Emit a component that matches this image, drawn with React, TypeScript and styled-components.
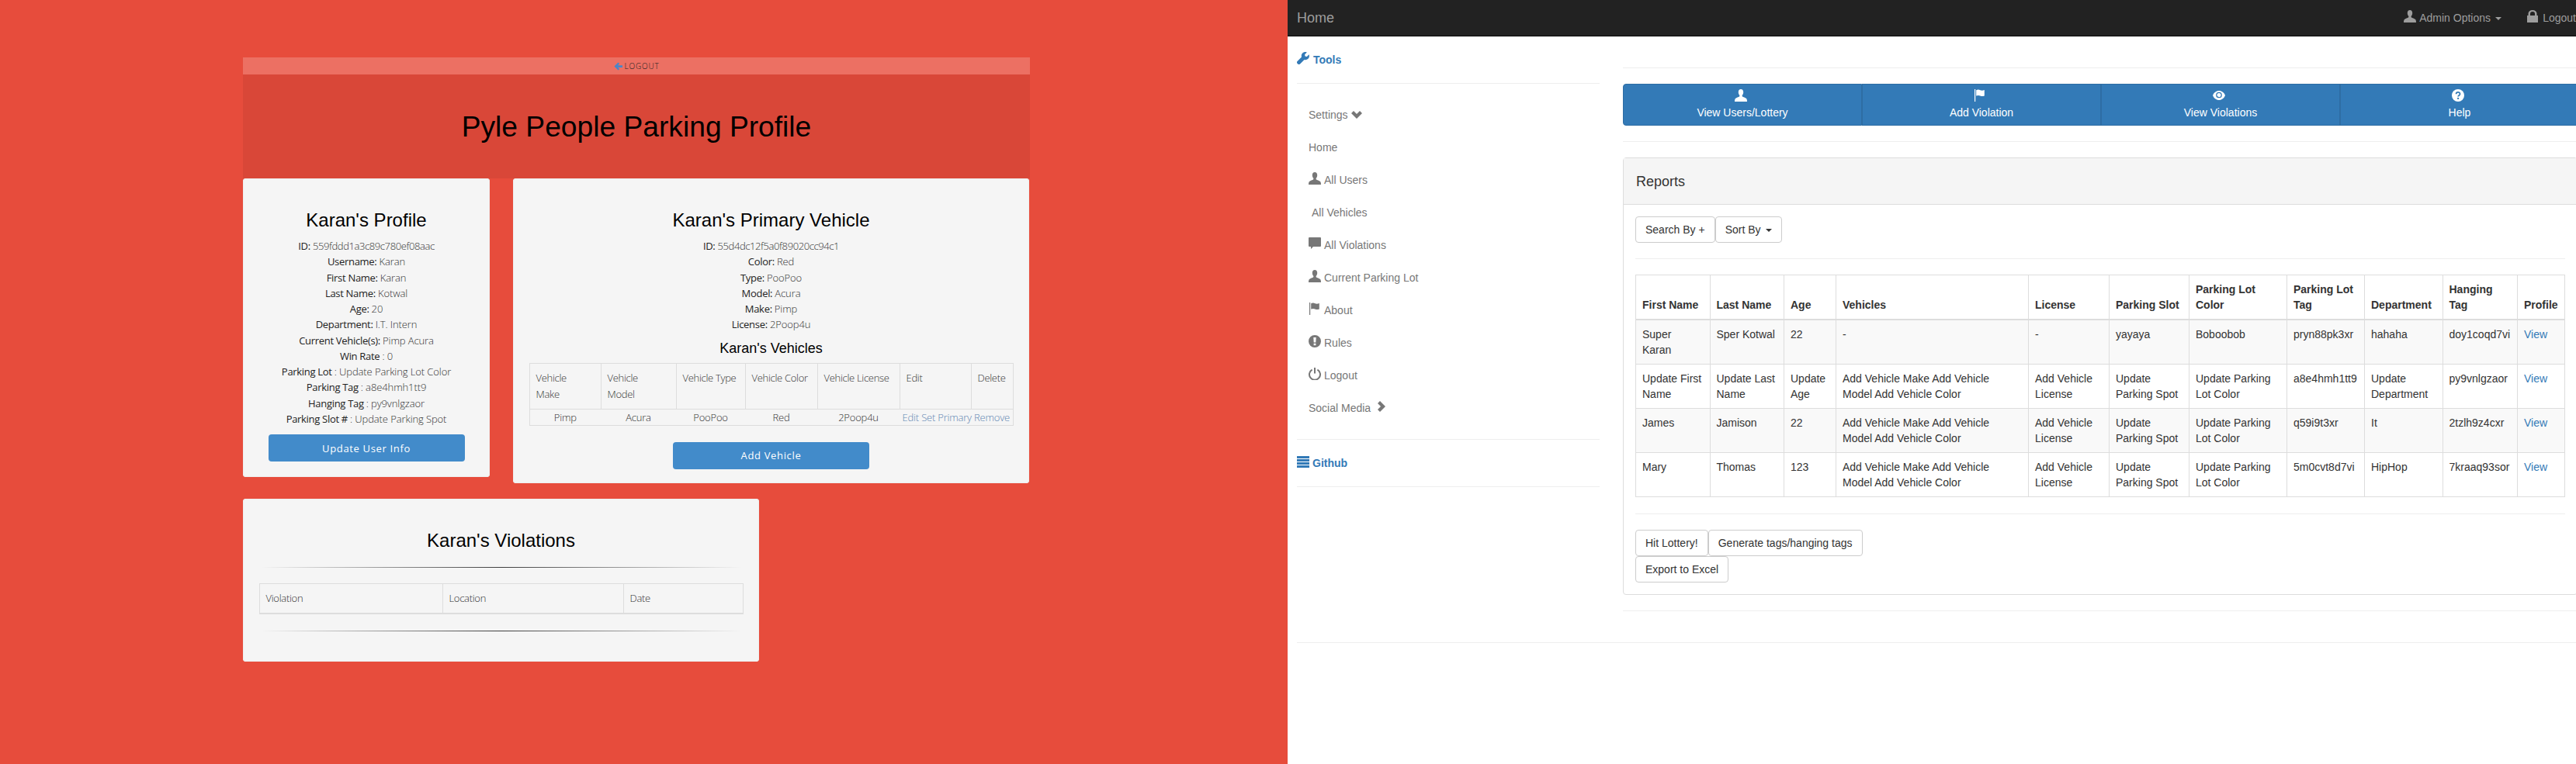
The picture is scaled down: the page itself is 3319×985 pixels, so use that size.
import React from "react"
import styled, { createGlobalStyle } from "styled-components"

const GlobalStyle = createGlobalStyle`
  html, body {
    margin: 0;
    width: 3319px;
    height: 985px;
    overflow: hidden;
    background: #fff;
    font-family: "Liberation Sans", Arial, sans-serif;
  }
  * { box-sizing: border-box; }
`

const Page = styled.div`
  display: flex;
  width: 3319px;
  height: 985px;
  overflow: hidden;
`

/* ---------- left screenshot: profile page ---------- */

const ProfilePane = styled.div`
  flex: 0 0 1659px;
  height: 985px;
  padding: 74px 0 0 313px;
  background: #e74c3c;
  font-family: "Open Sans", sans-serif;
`

const LogoutBar = styled.div`
  width: 1014px;
  height: 22px;
  display: flex;
  align-items: center;
  justify-content: center;
  gap: 3px;
  background: #ec7063;
  color: #222;
  font-size: 10px;
  letter-spacing: 0.8px;
  font-weight: 300;
  text-transform: uppercase;
`

const Hero = styled.div`
  width: 1014px;
  height: 134px;
  display: flex;
  align-items: center;
  justify-content: center;
  background: #d94738;
  color: #000;
  font-family: "Liberation Sans", sans-serif;
  font-size: 37.2px;
`

const CardRow = styled.div`
  display: flex;
  align-items: flex-start;
  gap: 30px;
`

const Card = styled.div<{ $w: number; $h: number }>`
  width: ${p => p.$w}px;
  height: ${p => p.$h}px;
  padding-top: 40px;
  background: #f5f5f5;
  border-radius: 4px;
  box-shadow: inset 0 0 0 1px #eee;
  text-align: center;
`

const CardTitle = styled.h3`
  margin: 0 0 10px;
  font-family: "Liberation Sans", sans-serif;
  font-size: 24px;
  line-height: 27px;
  font-weight: 400;
  color: #000;
`

const SubTitle = styled.h4`
  margin: 0;
  padding: 9px 0 8px;
  font-family: "Liberation Sans", sans-serif;
  font-size: 18px;
  line-height: 22px;
  font-weight: 400;
  color: #000;
`

const Fact = styled.div`
  font-size: 13px;
  line-height: 20.25px;
  font-weight: 400;
  color: #222;
  letter-spacing: -0.3px;
`

const FactValue = styled.span<{ $tight?: boolean }>`
  color: #333;
  font-weight: 300;
  letter-spacing: ${p => (p.$tight ? -0.4 : -0.1)}px;
`

const BlueButton = styled.div<{ $w: number; $mt: number }>`
  width: ${p => p.$w}px;
  height: 35px;
  margin: ${p => p.$mt}px auto 0;
  display: flex;
  align-items: center;
  justify-content: center;
  background: #428bca;
  border-radius: 4px;
  color: #fff;
  font-size: 13px;
  letter-spacing: 0.65px;
`

const SmallTable = styled.table<{ $w: number }>`
  width: ${p => p.$w}px;
  margin: 0 auto;
  table-layout: fixed;
  border-collapse: collapse;
  border: 1px solid #ddd;
  font-size: 13px;
  font-weight: 300;
  line-height: 21px;
  color: #333;
  letter-spacing: -0.3px;
`

const SizedCol = styled.col<{ $w: number }>`
  width: ${p => p.$w}px;
`

const SmallHead = styled.td<{ $thick?: boolean }>`
  padding: 8px;
  border: 1px solid #ddd;
  border-bottom-width: ${p => (p.$thick ? 2 : 1)}px;
  text-align: left;
  vertical-align: top;
`

const SmallCell = styled.td`
  height: 20px;
  padding: 0;
  text-align: center;
  line-height: 20px;
  white-space: nowrap;
  letter-spacing: -0.2px;
`

const ActionLink = styled.span`
  color: #5f86b3;
`

const FadeRule = styled.div<{ $top: number; $bottom: number }>`
  width: 620px;
  height: 1px;
  margin: ${p => p.$top}px auto ${p => p.$bottom}px;
  background: linear-gradient(to right, rgba(0, 0, 0, 0), rgba(0, 0, 0, 0.75), rgba(0, 0, 0, 0));
`

const Stacked = styled.div`
  margin-top: 20px;
`

/* ---------- right screenshot: admin page ---------- */

const AdminPane = styled.div`
  flex: 1;
  height: 985px;
  overflow: hidden;
  background: #fff;
  color: #333;
  font-size: 14px;
  line-height: 20px;
`

const Navbar = styled.div`
  display: flex;
  align-items: center;
  height: 47px;
  padding-left: 12px;
  background: #222;
  border-bottom: 1px solid #080808;
  color: #9d9d9d;
`

const Brand = styled.div`
  font-size: 18px;
  flex: 1;
`

const NavAction = styled.div<{ $w: number }>`
  flex: 0 0 ${p => p.$w}px;
  white-space: nowrap;
`

const Caret = styled.span<{ $color: string }>`
  display: inline-block;
  width: 0;
  height: 0;
  margin-left: 6px;
  vertical-align: middle;
  border-top: 4px solid ${p => p.$color};
  border-left: 4px solid transparent;
  border-right: 4px solid transparent;
`

const Columns = styled.div`
  display: flex;
  align-items: flex-start;
`

const Sidebar = styled.div`
  flex: 0 0 432px;
  padding: 20px 30px 0 12px;
`

const SideHeading = styled.div`
  font-weight: 700;
  color: #337ab7;
  white-space: nowrap;
`

const Rule = styled.hr<{ $top?: number; $bottom?: number }>`
  margin: ${p => p.$top ?? 20}px 0 ${p => p.$bottom ?? 20}px;
  border: 0;
  border-top: 1px solid #eee;
`

const SideItem = styled.div<{ $indent?: number }>`
  padding: 11px 15px 11px ${p => 15 + (p.$indent ?? 0)}px;
  color: #777;
  white-space: nowrap;
`

const Glyph = styled.svg<{ $w?: number; $h?: number; $mr?: number; $ml?: number; $drop?: number }>`
  width: ${p => p.$w ?? 16}px;
  height: ${p => p.$h ?? 16}px;
  margin-right: ${p => p.$mr ?? 0}px;
  margin-left: ${p => p.$ml ?? 0}px;
  vertical-align: -${p => p.$drop ?? 1}px;
  fill: currentColor;
`

const Main = styled.div`
  flex: 0 0 1232px;
`

const ActionGroup = styled.div`
  display: flex;
  margin-top: 20px;
`

const ActionButton = styled.div<{ $first?: boolean }>`
  flex: 0 0 308px;
  height: 54px;
  padding-top: 6px;
  background: #337ab7;
  border: 1px solid #2e6da4;
  border-radius: ${p => (p.$first ? "4px 0 0 4px" : "0")};
  color: #fff;
  text-align: center;
`

const ActionIcon = styled.div`
  height: 20px;
  padding-right: 5px;
`

const Panel = styled.div`
  width: 1230px;
  border: 1px solid #ddd;
  border-radius: 4px;
`

const PanelHeading = styled.div`
  height: 60px;
  padding: 0 16px;
  display: flex;
  align-items: center;
  background: #f5f5f5;
  border-bottom: 1px solid #ddd;
  font-size: 18px;
`

const PanelBody = styled.div`
  padding: 15px;
`

const ButtonRow = styled.div`
  display: flex;
`

const PlainButton = styled.div`
  padding: 6px 12px;
  height: 34px;
  background: #fff;
  border: 1px solid #ccc;
  border-radius: 4px;
  white-space: nowrap;
`

const ReportTable = styled.table`
  width: 1197px;
  table-layout: fixed;
  border-collapse: collapse;
  margin-bottom: 21px;
`

const ReportHead = styled.th`
  padding: 8px;
  border: 1px solid #ddd;
  border-bottom-width: 2px;
  text-align: left;
  vertical-align: bottom;
  font-weight: 700;
`

const ReportRow = styled.tr<{ $striped: boolean }>`
  background: ${p => (p.$striped ? "#f9f9f9" : "#fff")};
`

const ReportCell = styled.td`
  padding: 8px;
  border: 1px solid #ddd;
  vertical-align: top;
  height: 57px;
`

const ViewLink = styled.span`
  color: #337ab7;
`

const FooterRule = styled.div`
  margin: 40px 0 0 12px;
  border-top: 1px solid #eee;
`

/* ---------- icons ---------- */

const UserPath = "M8 0c2 0 3.2 1.6 3.2 3.8 0 1.6-.6 3-1.4 3.9-.3.4-.3 1.3.2 1.7.8.6 3.8 1.5 5 2.6.6.6 1 2 1 4H0c0-2 .4-3.4 1-4 1.2-1.1 4.2-2 5-2.6.5-.4.5-1.3.2-1.7-.8-.9-1.4-2.3-1.4-3.9C4.8 1.6 6 0 8 0z"
const FlagPath = "M1 0h1.2v16H1zM3.2 1.2c2-.9 3.6-.7 5.2 0 1.7.7 3.3.6 5.4-.2v7.4c-2 .9-3.7.9-5.4.2-1.6-.7-3.2-.8-5.2 0z"

const UserIcon: React.FC<{ mr?: number }> = ({ mr }) => (
  <Glyph viewBox="0 0 16 16" $mr={mr}><path d={UserPath} /></Glyph>
)

const FlagIcon: React.FC<{ mr?: number }> = ({ mr }) => (
  <Glyph viewBox="0 0 16 16" $mr={mr}><path d={FlagPath} /></Glyph>
)

const SIDE_LINKS: { label: string; icon?: React.ReactNode; indent?: number }[] = [
  { label: "Home" },
  { label: "All Users", icon: <UserIcon mr={4} /> },
  { label: "All Vehicles", indent: 4 },
  {
    label: "All Violations",
    icon: (
      <Glyph viewBox="0 0 16 16" $mr={4}>
        <path d="M1 0h14a1 1 0 0 1 1 1v10a1 1 0 0 1-1 1H6l-3 3v-3H1a1 1 0 0 1-1-1V1a1 1 0 0 1 1-1z" />
      </Glyph>
    ),
  },
  { label: "Current Parking Lot", icon: <UserIcon mr={4} /> },
  { label: "About", icon: <FlagIcon mr={4} /> },
  {
    label: "Rules",
    icon: (
      <Glyph viewBox="0 0 16 16" $mr={4}>
        <path
          fillRule="evenodd"
          d="M8 0a8 8 0 1 1 0 16A8 8 0 0 1 8 0zM6.3 3l.4 6.5h2.6L9.7 3zM6.6 10.7v2.5h2.8v-2.5z"
        />
      </Glyph>
    ),
  },
  {
    label: "Logout",
    icon: (
      <Glyph viewBox="0 0 16 16" $mr={4}>
        <path d="M4.6 2.6A7 7 0 1 0 11.4 2.6" fill="none" stroke="currentColor" strokeWidth="2" />
        <path d="M7 0h2v7.5H7z" />
      </Glyph>
    ),
  },
]

const PROFILE_FACTS: [string, string, boolean?][] = [
  ["ID: ", "559fddd1a3c89c780ef08aac", true],
  ["Username: ", "Karan"],
  ["First Name: ", "Karan"],
  ["Last Name: ", "Kotwal"],
  ["Age: ", "20"],
  ["Department: ", "I.T. Intern"],
  ["Current Vehicle(s): ", "Pimp Acura"],
  ["Win Rate ", ": 0"],
  ["Parking Lot ", ": Update Parking Lot Color"],
  ["Parking Tag ", ": a8e4hmh1tt9"],
  ["Hanging Tag ", ":  py9vnlgzaor"],
  ["Parking Slot # ", ": Update Parking Spot"],
]

const VEHICLE_FACTS: [string, string, boolean?][] = [
  ["ID: ", "55d4dc12f5a0f89020cc94c1", true],
  ["Color: ", "Red"],
  ["Type: ", "PooPoo"],
  ["Model: ", "Acura"],
  ["Make: ", "Pimp"],
  ["License: ", "2Poop4u"],
]

const VEHICLE_WIDTHS = [92, 97, 89, 93, 106, 92, 54]
const VIOLATION_WIDTHS = [236, 233, 154]
const VIOLATION_HEADS = ["Violation", "Location", "Date"]

const REPORT_WIDTHS = [95.5, 95.5, 67, 248, 104, 103, 126, 100, 100.5, 96.5, 61]
const REPORT_HEADS = [
  "First Name", "Last Name", "Age", "Vehicles", "License", "Parking Slot",
  "Parking Lot Color", "Parking Lot Tag", "Department", "Hanging Tag", "Profile",
]

const ADD_VEHICLE = "Add Vehicle Make Add Vehicle Model Add Vehicle Color"
const REPORT_ROWS = [
  ["Super Karan", "Sper Kotwal", "22", "-", "-", "yayaya", "Boboobob", "pryn88pk3xr", "hahaha", "doy1coqd7vi"],
  ["Update First Name", "Update Last Name", "Update Age", ADD_VEHICLE, "Add Vehicle License", "Update Parking Spot", "Update Parking Lot Color", "a8e4hmh1tt9", "Update Department", "py9vnlgzaor"],
  ["James", "Jamison", "22", ADD_VEHICLE, "Add Vehicle License", "Update Parking Spot", "Update Parking Lot Color", "q59i9t3xr", "It", "2tzlh9z4cxr"],
  ["Mary", "Thomas", "123", ADD_VEHICLE, "Add Vehicle License", "Update Parking Spot", "Update Parking Lot Color", "5m0cvt8d7vi", "HipHop", "7kraaq93sor"],
]

const App: React.FC = () => (
  <Page>
    <GlobalStyle />
    <ProfilePane>
      <LogoutBar>
        <Glyph viewBox="0 0 12 12" $w={11} $h={11} $drop={0}>
          <path fill="#4a86c8" d="M6 .5l1.8 1.8-2.2 2.2H12v3H5.6l2.2 2.2L6 11.5.5 6z" />
        </Glyph>
        Logout
      </LogoutBar>
      <Hero>Pyle People Parking Profile</Hero>
      <CardRow>
        <Card $w={318} $h={385}>
          <CardTitle>Karan's Profile</CardTitle>
          {PROFILE_FACTS.map(([label, value, tight]) => (
            <Fact key={label}>{label}<FactValue $tight={tight}>{value}</FactValue></Fact>
          ))}
          <BlueButton $w={253} $mt={10}>Update User Info</BlueButton>
        </Card>
        <Card $w={665} $h={393}>
          <CardTitle>Karan's Primary Vehicle</CardTitle>
          {VEHICLE_FACTS.map(([label, value, tight]) => (
            <Fact key={label}>{label}<FactValue $tight={tight}>{value}</FactValue></Fact>
          ))}
          <SubTitle>Karan's Vehicles</SubTitle>
          <SmallTable $w={623}>
            <colgroup>
              {VEHICLE_WIDTHS.map((w, i) => <SizedCol key={i} $w={w} />)}
            </colgroup>
            <tbody>
              <tr>
                <SmallHead>Vehicle<br />Make</SmallHead>
                <SmallHead>Vehicle<br />Model</SmallHead>
                <SmallHead>Vehicle Type</SmallHead>
                <SmallHead>Vehicle Color</SmallHead>
                <SmallHead>Vehicle License</SmallHead>
                <SmallHead>Edit</SmallHead>
                <SmallHead>Delete</SmallHead>
              </tr>
              <tr>
                <SmallCell>Pimp</SmallCell>
                <SmallCell>Acura</SmallCell>
                <SmallCell>PooPoo</SmallCell>
                <SmallCell>Red</SmallCell>
                <SmallCell>2Poop4u</SmallCell>
                <SmallCell colSpan={2}>
                  <ActionLink>Edit Set Primary Remove</ActionLink>
                </SmallCell>
              </tr>
            </tbody>
          </SmallTable>
          <BlueButton $w={253} $mt={21}>Add Vehicle</BlueButton>
        </Card>
      </CardRow>
      <Stacked>
        <Card $w={665} $h={210}>
          <CardTitle>Karan's Violations</CardTitle>
          <FadeRule $top={21} $bottom={20} />
          <SmallTable $w={623}>
            <colgroup>
              {VIOLATION_WIDTHS.map((w, i) => <SizedCol key={i} $w={w} />)}
            </colgroup>
            <tbody>
              <tr>
                {VIOLATION_HEADS.map(h => <SmallHead key={h} $thick>{h}</SmallHead>)}
              </tr>
            </tbody>
          </SmallTable>
          <FadeRule $top={21} $bottom={0} />
        </Card>
      </Stacked>
    </ProfilePane>

    <AdminPane>
      <Navbar>
        <Brand>Home</Brand>
        <NavAction $w={158}>
          <UserIcon mr={4} />Admin Options<Caret $color="#9d9d9d" />
        </NavAction>
        <NavAction $w={62}>
          <Glyph viewBox="0 0 16 16" $mr={5}>
            <path d="M1 7h1.5V4.500a5.500 4.500 0 0 1 11 0V7H15v9H1zM5 7h6V4.500a3 2.500 0 0 0-6 0z" />
          </Glyph>
          Logout
        </NavAction>
      </Navbar>
      <Columns>
        <Sidebar>
          <SideHeading>
            <Glyph viewBox="0 0 16 16" $mr={5}>
              <path d="M15.500 3.200l-2.700 2.700-2.300-.4-.4-2.300L12.800.5C10.800-.3 8.600.1 7.200 1.600 5.900 2.900 5.500 4.800 6 6.500L.5 12c-.8.8-.8 2 0 2.800l.7.7c.8.8 2 .8 2.800 0l5.500-5.500c1.700.5 3.600.1 4.900-1.200 1.500-1.400 1.900-3.600 1.100-5.600z" />
            </Glyph>
            Tools
          </SideHeading>
          <Rule $bottom={19} />
          <SideItem>
            Settings
            <Glyph viewBox="0 0 14 10" $w={14} $h={10} $ml={4} $drop={0}>
              <path d="M0 3l3-3 4 4 4-4 3 3-7 7z" />
            </Glyph>
          </SideItem>
          {SIDE_LINKS.map(link => (
            <SideItem key={link.label} $indent={link.indent}>{link.icon}{link.label}</SideItem>
          ))}
          <SideItem>
            Social Media
            <Glyph viewBox="0 0 10 14" $w={10} $h={14} $ml={9} $drop={0}>
              <path d="M3 0l7 7-7 7-3-3 4-4-4-4z" />
            </Glyph>
          </SideItem>
          <Rule $top={19} />
          <SideHeading>
            <Glyph viewBox="0 0 16 16" $mr={4}>
              <path shapeRendering="crispEdges" d="M0 1h16v2.500H0zM0 5h16v2.500H0zM0 9h16v2.500H0zM0 13h16v2.500H0z" />
            </Glyph>
            Github
          </SideHeading>
          <Rule />
        </Sidebar>
        <Main>
          <Rule $top={40} $bottom={0} />
          <ActionGroup>
            <ActionButton $first>
              <ActionIcon><UserIcon /></ActionIcon>
              View Users/Lottery
            </ActionButton>
            <ActionButton>
              <ActionIcon><FlagIcon /></ActionIcon>
              Add Violation
            </ActionButton>
            <ActionButton>
              <ActionIcon>
                <Glyph viewBox="0 0 16 16">
                  <path d="M8 2c3.600 0 6.600 2.500 8 6-1.400 3.500-4.400 6-8 6s-6.600-2.500-8-6c1.400-3.500 4.400-6 8-6z" />
                  <circle cx="8" cy="7.5" r="3.2" fill="none" stroke="#337ab7" strokeWidth="1.3" />
                </Glyph>
              </ActionIcon>
              View Violations
            </ActionButton>
            <ActionButton>
              <ActionIcon>
                <Glyph viewBox="0 0 16 16">
                  <circle cx="8" cy="8" r="8" />
                  <path d="M5.600 6.200c0-3 4.900-3 4.900 0 0 1.700-2.400 1.700-2.400 3.400" fill="none" stroke="#337ab7" strokeWidth="1.8" />
                  <path d="M7.100 10.900h2v2h-2z" fill="#337ab7" />
                </Glyph>
              </ActionIcon>
              Help
            </ActionButton>
          </ActionGroup>
          <Rule />
          <Panel>
            <PanelHeading>Reports</PanelHeading>
            <PanelBody>
              <ButtonRow>
                <PlainButton>Search By +</PlainButton>
                <PlainButton>Sort By<Caret $color="#333" /></PlainButton>
              </ButtonRow>
              <Rule />
              <ReportTable>
                <colgroup>
                  {REPORT_WIDTHS.map((w, i) => <SizedCol key={i} $w={w} />)}
                </colgroup>
                <thead>
                  <tr>
                    {REPORT_HEADS.map(h => <ReportHead key={h}>{h}</ReportHead>)}
                  </tr>
                </thead>
                <tbody>
                  {REPORT_ROWS.map((row, i) => (
                    <ReportRow key={i} $striped={i % 2 === 0}>
                      {row.map((cell, j) => <ReportCell key={j}>{cell}</ReportCell>)}
                      <ReportCell><ViewLink>View</ViewLink></ReportCell>
                    </ReportRow>
                  ))}
                </tbody>
              </ReportTable>
              <Rule $top={0} />
              <ButtonRow>
                <PlainButton>Hit Lottery!</PlainButton>
                <PlainButton>Generate tags/hanging tags</PlainButton>
              </ButtonRow>
              <ButtonRow>
                <PlainButton>Export to Excel</PlainButton>
              </ButtonRow>
            </PanelBody>
          </Panel>
          <Rule $bottom={0} />
        </Main>
      </Columns>
      <FooterRule />
    </AdminPane>
  </Page>
)

export default App
